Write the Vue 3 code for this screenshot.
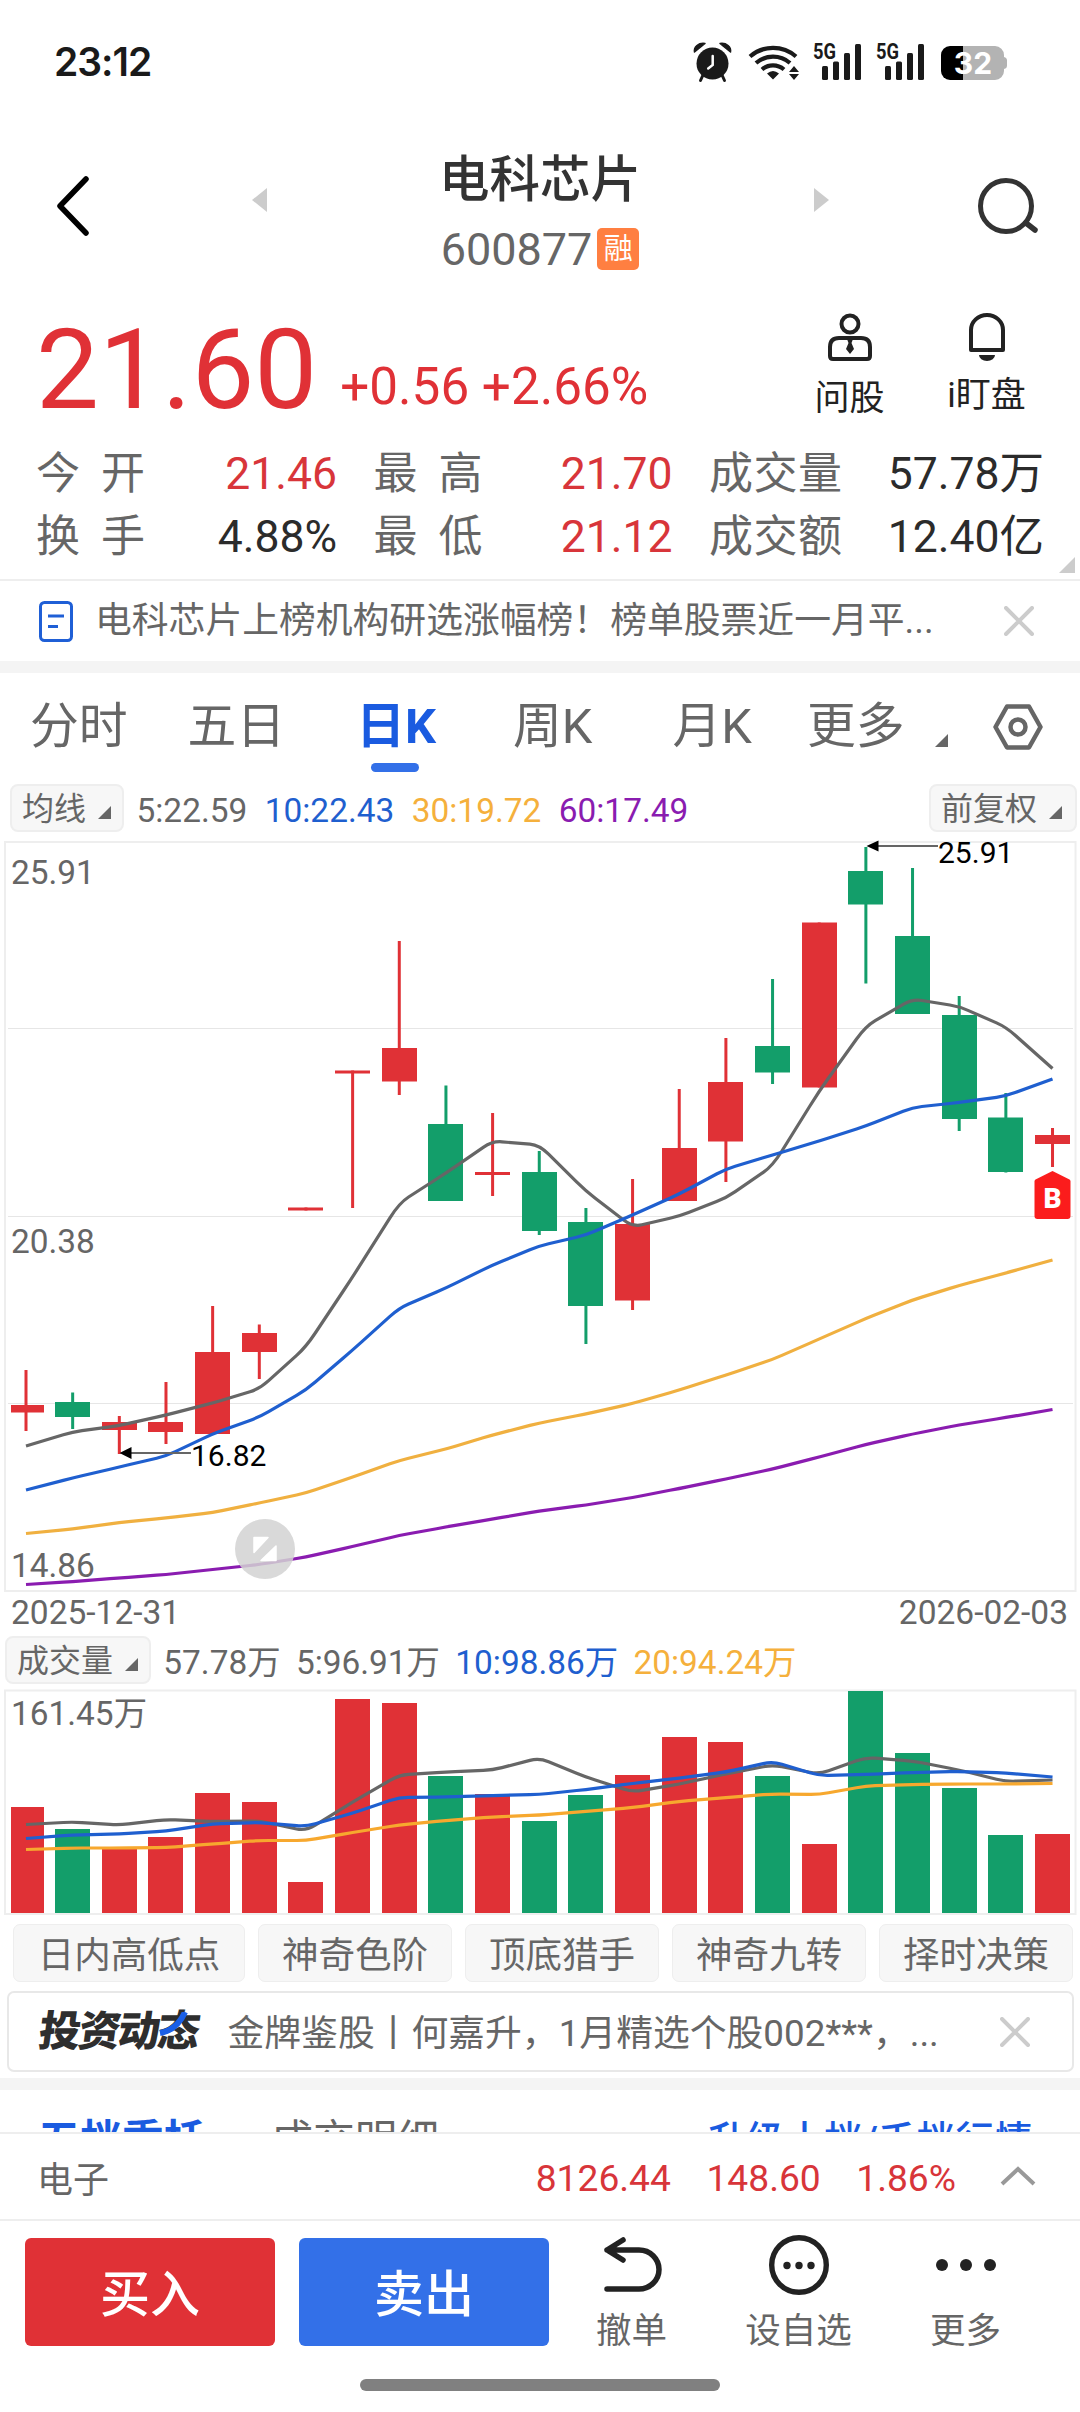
<template>
  <div class="page">
    <div class="status-bar">
      <span class="clock">23:12</span>
      <svg class="status-icons" width="320" height="46" viewBox="690 38 320 46">
        <g fill="#1a1a1a">
          <circle cx="712.5" cy="63.500" r="16" />
          <path d="M694.5 52c-1-5 4-9.500 10.500-8.500zM730.500 52c1-5-4-9.500-10.500-8.500z" stroke="#1a1a1a" stroke-width="1.500" stroke-linejoin="round" />
          <path d="M703 75l-2.500 5.500M722 75l2.500 5.500" stroke="#1a1a1a" stroke-width="3" stroke-linecap="round" />
          <path d="M712.700 56v9l-4.500 3.500" fill="none" stroke="#fff" stroke-width="2.500" stroke-linecap="round" />
        </g>
        <g fill="none" stroke="#1a1a1a" stroke-width="4.200">
          <path d="M750 56.500a35 35 0 0 1 46 0" />
          <path d="M756 63a26 26 0 0 1 34 0" />
          <path d="M762 69.500a17 17 0 0 1 22 0" />
        </g>
        <path d="M767 73.500q6-5 12 0l-6 6zM794 66l5 6h-10zM794 80l5-6h-10z" fill="#1a1a1a" />
        <g v-for="x in [813, 876]" :key="x" fill="#1a1a1a">
          <text :x="x" y="58.500" class="net" textLength="23" lengthAdjust="spacingAndGlyphs">5G</text>
          <rect :x="x + 9" y="66" width="6" height="14" rx="1.500" />
          <rect :x="x + 20" y="61.500" width="6" height="18.500" rx="1.500" />
          <rect :x="x + 31" y="53" width="6" height="27" rx="1.500" />
          <rect :x="x + 42" y="44" width="6" height="36" rx="1.500" />
        </g>
        <path d="M963 46h32a9 9 0 0 1 9 9v2q3 .500 3 3.500v5q0 3-3 3.500v2a9 9 0 0 1-9 9h-32z" fill="#b3b3b3" />
        <path d="M963 46h-13a9 9 0 0 0-9 9v16a9 9 0 0 0 9 9h13z" fill="#000" />
        <text x="973" y="74" class="battery" text-anchor="middle">32</text>
      </svg>
    </div>

    <header class="header">
      <svg class="back" width="34" height="60" viewBox="0 0 34 60">
        <path d="M30 3 4 30l26 27" fill="none" stroke="#000" stroke-width="5.500" stroke-linecap="round" stroke-linejoin="round" />
      </svg>
      <svg class="arrow" width="15" height="24" viewBox="0 0 15 24"><path d="M15 0v24L0 12z" fill="#ccc" /></svg>
      <div class="title">
        <h1>电科芯片</h1>
        <div class="code"><span>600877</span><i>融</i></div>
      </div>
      <svg class="arrow" width="15" height="24" viewBox="0 0 15 24"><path d="M0 0v24l15-12z" fill="#ccc" /></svg>
      <svg class="search" width="64" height="58" viewBox="0 0 64 58">
        <circle cx="29" cy="29" r="25.500" fill="none" stroke="#333" stroke-width="5" />
        <path d="M49 46l9 7" stroke="#333" stroke-width="5.500" stroke-linecap="round" />
      </svg>
    </header>

    <section class="quote">
      <div class="quote-top">
        <span class="price">21.60</span>
        <span class="change">+0.56 +2.66%</span>
        <div class="shortcuts">
          <div class="shortcut">
            <svg width="46" height="48" viewBox="0 0 46 48" fill="none" stroke="#222" stroke-width="4">
              <circle cx="23" cy="11" r="8.500" />
              <path d="M12 25h22q9 0 9 9v9q0 3-3 3H6q-3 0-3-3v-9q0-9 9-9z" />
              <path d="M20 26h6l-1.500 4 2.500 6-4 5-4-5 2.500-6z" fill="#222" stroke="none" />
            </svg>
            <span>问股</span>
          </div>
          <div class="shortcut">
            <svg width="38" height="48" viewBox="0 0 38 48">
              <path d="M3 37V17a16 15 0 0 1 32 0v20z" fill="none" stroke="#222" stroke-width="4" stroke-linejoin="round" />
              <path d="M11 42h16a8 6 0 0 1-16 0z" fill="#222" />
            </svg>
            <span class="watch">i盯盘</span>
          </div>
        </div>
      </div>
      <div class="stats">
        <div v-for="s in stats" :key="s.label" class="stat">
          <span class="stat-label"><b v-for="c in s.label" :key="c">{{ c }}</b></span>
          <span :class="{ up: s.up }">{{ s.value }}</span>
        </div>
      </div>
      <svg class="corner" width="16" height="16" viewBox="0 0 16 16"><path d="M16 0v16H0z" fill="#ccc" /></svg>
    </section>

    <div class="notice">
      <svg width="34" height="41" viewBox="0 0 34 41" fill="none" stroke="#1f5fd6" stroke-width="3">
        <rect x="1.500" y="1.500" width="31" height="38" rx="4" />
        <path d="M9 15h16M9 25.500h10" />
      </svg>
      <span class="notice-text">电科芯片上榜机构研选涨幅榜！榜单股票近一月平...</span>
      <svg class="close" width="30" height="30" viewBox="0 0 30 30"><path d="M2 2l26 26M28 2 2 28" stroke="#ccc" stroke-width="4" stroke-linecap="round" /></svg>
    </div>
    <div class="band"></div>

    <nav class="tabs">
      <span v-for="t in tabs" :key="t" class="tab" :class="{ active: t === '日K' }">{{ t }}</span>
      <svg class="tab-tri" width="13" height="13" viewBox="0 0 13 13"><path d="M13 0v13H0z" fill="#666" /></svg>
      <svg width="50" height="46" viewBox="0 0 50 46" fill="none" stroke="#666" stroke-width="4.500">
        <path d="M14 2.500h22L47.500 23 36 43.500H14L2.500 23z" stroke-linejoin="round" />
        <circle cx="25" cy="23" r="7.500" />
      </svg>
    </nav>

    <div class="legend ma-legend">
      <span class="pill">均线<svg width="13" height="13" viewBox="0 0 13 13"><path d="M13 0v13H0z" fill="#666" /></svg></span>
      <span>5:22.59</span>
      <span class="blue">10:22.43</span>
      <span class="orange">30:19.72</span>
      <span class="purple">60:17.49</span>
      <span class="pill right">前复权<svg width="13" height="13" viewBox="0 0 13 13"><path d="M13 0v13H0z" fill="#666" /></svg></span>
    </div>

    <svg class="chart" width="1080" height="752" viewBox="0 840 1080 752">
      <rect x="5" y="842" width="1070.500" height="749" fill="none" stroke="#eee" stroke-width="2" />
      <path d="M8 1028.500H1073M8 1216.500H1073M8 1403.500H1073" stroke="#e6e6e6" stroke-width="1" />
      <text x="11" y="884" class="axis">25.91</text>
      <text x="11" y="1253" class="axis">20.38</text>
      <text x="11" y="1577" class="axis">14.86</text>
      <g v-for="(k, i) in candles" :key="i" :fill="color(k)">
        <rect :x="cx(i) - 1.5" :y="k[1]" width="3" :height="k[4] - k[1]" />
        <rect :x="barX(i)" :y="k[2]" :width="barW(i)" :height="k[3] - k[2]" />
      </g>
      <path v-for="l in priceLines" :key="l.color" :d="linePath(l.points)" :stroke="l.color" class="line" />
      <path d="M878 846H938M131 1453H191" stroke="#666" stroke-width="2" />
      <path d="M866.500 846l12-5.500v11zM119.500 1453l12-6v12z" fill="#000" />
      <text x="938" y="863" class="mark">25.91</text>
      <text x="191" y="1466" class="mark">16.82</text>
      <path d="M1052.500 1171l17 8.500q1 .500 1 2V1216q0 3-3 3h-30q-3 0-3-3v-34.500q0-1.500 1-2z" fill="#fb1c1c" />
      <text x="1052.500" y="1208" text-anchor="middle" class="buy-mark">B</text>
      <circle cx="265" cy="1549" r="30" fill="#d2d2d2" fill-opacity=".85" />
      <path d="M254 1537.500h14l-14 15zM276 1546v14.500h-15z" fill="#fff" stroke="#fff" stroke-width="1.500" stroke-linejoin="round" />
    </svg>
    <div class="dates"><span>2025-12-31</span><span>2026-02-03</span></div>

    <div class="legend vol-legend">
      <span class="pill">成交量<svg width="13" height="13" viewBox="0 0 13 13"><path d="M13 0v13H0z" fill="#666" /></svg></span>
      <span>57.78万</span>
      <span>5:96.91万</span>
      <span class="blue">10:98.86万</span>
      <span class="orange">20:94.24万</span>
    </div>
    <svg class="chart" width="1080" height="240" viewBox="0 1684 1080 240">
      <rect x="5" y="1690.500" width="1070.500" height="223.500" fill="none" stroke="#eee" stroke-width="2" />
      <text x="11" y="1725" class="axis">161.45万</text>
      <rect v-for="(y, i) in volumes" :key="i" :x="barX(i)" :y="y" :width="barW(i)" :height="1913 - y" :fill="color(candles[i])" />
      <path v-for="l in volumeLines" :key="l.color" :d="linePath(l.points)" :stroke="l.color" class="line" />
    </svg>

    <div class="tools">
      <span v-for="t in tools" :key="t" :class="{ wide: t.length === 5 }">{{ t }}</span>
    </div>

    <div class="ad">
      <div class="ad-logo">
        <span>投资动态</span>
        <svg width="32" height="26" viewBox="0 0 32 26"><path d="M27 0Q19 18 2 21" fill="none" stroke="#1a5fe6" stroke-width="6" /></svg>
      </div>
      <span class="ad-text">金牌鉴股丨何嘉升，1月精选个股002***，...</span>
      <svg width="30" height="30" viewBox="0 0 30 30"><path d="M2 2l26 26M28 2 2 28" stroke="#ccc" stroke-width="4" stroke-linecap="round" /></svg>
    </div>
    <div class="band"></div>

    <div class="depth">
      <b>五档委托</b>
      <span>成交明细</span>
      <a>升级十档/千档行情</a>
    </div>

    <div class="sector">
      <span class="sector-name">电子</span>
      <span>8126.44</span>
      <span>148.60</span>
      <span>1.86%</span>
      <svg width="36" height="20" viewBox="0 0 36 20"><path d="M2 18 18 3l16 15" fill="none" stroke="#999" stroke-width="4" /></svg>
    </div>

    <footer class="actions">
      <button class="buy">买入</button>
      <button class="sell">卖出</button>
      <div class="action">
        <svg width="60" height="60" viewBox="0 0 60 60" fill="none" stroke="#222" stroke-width="5.500" stroke-linecap="round" stroke-linejoin="round">
          <path d="M21 5 5 15l16 10M5 15h32a20 19.500 0 0 1 0 39H5" />
        </svg>
        <span>撤单</span>
      </div>
      <div class="action">
        <svg width="60" height="60" viewBox="0 0 60 60">
          <circle cx="30" cy="30" r="27.300" fill="none" stroke="#222" stroke-width="5.400" />
          <circle v-for="x in [18, 30, 42]" :key="x" :cx="x" cy="30.500" r="3.700" fill="#222" />
        </svg>
        <span>设自选</span>
      </div>
      <div class="action">
        <svg width="60" height="60" viewBox="0 0 60 60" fill="#222">
          <circle v-for="x in [6, 30, 54]" :key="x" :cx="x" cy="30" r="6" />
        </svg>
        <span>更多</span>
      </div>
    </footer>
    <div class="home-bar"></div>
  </div>
</template>

<script setup>
const stats = [
  { label: '今开', value: '21.46', up: true },
  { label: '最高', value: '21.70', up: true },
  { label: '成交量', value: '57.78万' },
  { label: '换手', value: '4.88%' },
  { label: '最低', value: '21.12', up: true },
  { label: '成交额', value: '12.40亿' },
];

const tabs = ['分时', '五日', '日K', '周K', '月K', '更多'];
const tools = ['日内高低点', '神奇色阶', '顶底猎手', '神奇九转', '择时决策'];

// [涨跌, 影线顶, 实体顶, 实体底, 影线底]
const candles = [
  [1, 1370, 1405, 1412.5, 1431],
  [0, 1392.5, 1402, 1417, 1429],
  [1, 1416, 1422, 1430, 1454],
  [1, 1382, 1422, 1432, 1444],
  [1, 1306, 1352, 1434, 1434],
  [1, 1324.5, 1333, 1352, 1379],
  [1, 1207.5, 1207.5, 1210.5, 1210.5],
  [1, 1070.5, 1070.5, 1073.5, 1208],
  [1, 941, 1048, 1081.5, 1095],
  [0, 1085.5, 1124, 1201, 1201],
  [1, 1113, 1172, 1175, 1196],
  [0, 1151, 1172, 1231, 1235],
  [0, 1208, 1222, 1306, 1344],
  [1, 1179, 1224, 1300.5, 1310],
  [1, 1089, 1148, 1201, 1201],
  [1, 1038, 1082, 1141.5, 1182],
  [0, 979, 1046, 1072.5, 1084],
  [1, 922.5, 922.5, 1087.5, 1087.5],
  [0, 847, 871, 904.5, 983.5],
  [0, 868, 936, 1014, 1014],
  [0, 996, 1015, 1119, 1131],
  [0, 1093, 1117.5, 1172, 1172.5],
  [1, 1128, 1135, 1144, 1167],
];

const priceLines = [
  {
    color: '#666',
    points: [1446, 1432, 1425.5, 1415, 1403, 1389, 1347, 1277, 1203, 1173, 1141, 1145, 1191, 1227, 1216, 1198, 1166, 1091, 1026, 999, 1006.5, 1027, 1068.5],
  },
  {
    color: '#1f5fcf',
    points: [1490, 1478, 1467, 1456, 1434, 1417, 1390, 1350, 1308, 1288, 1265, 1246, 1235, 1215, 1194, 1169, 1155, 1141, 1126, 1107.5, 1102.5, 1096, 1079],
  },
  {
    color: '#f0b040',
    points: [1533.5, 1529, 1522.5, 1518, 1512.5, 1503, 1493, 1477, 1460.5, 1449, 1435, 1423, 1414, 1403.5, 1390, 1375, 1359.5, 1339, 1318.5, 1300, 1285.5, 1273, 1260],
  },
  {
    color: '#8a1cb0',
    points: [1584.5, 1581.5, 1578, 1574.5, 1569.5, 1564.5, 1557, 1546.5, 1535.5, 1527, 1519, 1511, 1505, 1497.5, 1488.5, 1479, 1469, 1457, 1444.5, 1434, 1425, 1417.5, 1409.5],
  },
];

const volumes = [
  1807, 1829, 1849, 1837, 1793, 1802, 1882, 1699, 1703, 1776, 1794, 1821,
  1795, 1775, 1737, 1742, 1776, 1844, 1691, 1753, 1788, 1835, 1834,
];

const volumeLines = [
  {
    color: '#666',
    points: [1824.5, 1822, 1825, 1819.5, 1821.5, 1821, 1831, 1802, 1775, 1772, 1770, 1758, 1777, 1792, 1784, 1774, 1765, 1774, 1757.5, 1761, 1770, 1781.5, 1780],
  },
  {
    color: '#1f5fcf',
    points: [1838.5, 1835, 1834, 1831, 1824, 1822.5, 1826.5, 1813, 1797.5, 1797, 1795.5, 1794.5, 1789.5, 1783.5, 1778, 1772, 1761.5, 1775.5, 1774.5, 1772.5, 1771.5, 1773, 1777],
  },
  {
    color: '#f7a82e',
    points: [1849.5, 1848, 1848, 1847.5, 1844, 1840.5, 1840.5, 1832.5, 1825, 1820.5, 1817, 1815, 1811.5, 1807.5, 1801.5, 1797.5, 1794, 1794.5, 1786, 1784.5, 1784, 1784, 1783.5],
  },
];

const STEP = 46.66;
const cx = (i) => 26 + STEP * i;
// 第一根被左边框裁掉一点
const barX = (i) => (i === 0 ? 11 : Math.round(cx(i) - 17.5));
const barW = (i) => (i === 0 ? 33 : 35);
const color = (k) => (k[0] ? '#e03136' : '#139e6a');

// 折线转角做圆滑处理
const linePath = (points) => {
  const r = 0.2;
  let d = `M${cx(0)} ${points[0]}`;
  for (let i = 1; i < points.length - 1; i++) {
    const before = points[i] + (points[i - 1] - points[i]) * r;
    const after = points[i] + (points[i + 1] - points[i]) * r;
    d += ` L${cx(i) - STEP * r} ${before} Q${cx(i)} ${points[i]} ${cx(i) + STEP * r} ${after}`;
  }
  return `${d} L${cx(points.length - 1)} ${points[points.length - 1]}`;
};
</script>

<style>
body {
  margin: 0;
  background: #fff;
}
</style>

<style scoped>
.page {
  width: 1080px;
  height: 2412px;
  overflow: hidden;
  background: #fff;
  color: #666;
  font-family: Roboto, 'Noto Sans CJK SC', sans-serif;
}

.page svg {
  display: block;
  flex-shrink: 0;
}

.status-bar {
  height: 122px;
  padding: 0 70px 0 54px;
  display: flex;
  align-items: center;
  justify-content: space-between;
}

.clock {
  font: 600 39px/46px Inter, sans-serif;
  letter-spacing: -1px;
  padding-top: 2px;
  color: #1a1a1a;
}

.net {
  font: 700 22px 'Roboto', sans-serif;
}

.battery {
  font: 700 30px Inter, sans-serif;
  fill: #fff;
}

.header {
  height: 168px;
  display: grid;
  grid-template-columns: 205px 108px 454px 108px 205px;
  align-items: center;
}

.back {
  margin-left: 56px;
}

.arrow {
  justify-self: center;
  margin-bottom: 12px;
}

.search {
  margin-left: 102px;
}

.title {
  display: flex;
  flex-direction: column;
  align-items: center;
  padding-top: 18px;
}

.title h1 {
  margin: 0;
  font-size: 50.5px;
  font-weight: 500;
  line-height: 68px;
  color: #333;
}

.code {
  display: flex;
  align-items: center;
  gap: 5px;
  height: 70px;
  font-size: 45px;
}

.code span {
  line-height: 71px;
}

.code i {
  width: 42px;
  height: 42px;
  border-radius: 5px;
  background: #ff7f41;
  color: #fff;
  font-size: 29px;
  font-style: normal;
  line-height: 43px;
  text-align: center;
}

.quote {
  position: relative;
  height: 289px;
  border-bottom: 2px solid #eee;
  box-sizing: content-box;
}

.quote-top {
  display: flex;
  align-items: flex-end;
  height: 136px;
  padding: 0 25px 14px 36px;
}

.price {
  font-size: 112px;
  line-height: 112px;
  color: #e03136;
}

.change {
  margin: 0 0 14px 23px;
  font-size: 51.2px;
  line-height: 50px;
  color: #e03136;
}

.shortcuts {
  display: flex;
  align-self: flex-start;
  margin: 23px 0 0 auto;
}

.shortcut {
  width: 137px;
  display: flex;
  flex-direction: column;
  align-items: center;
  font-size: 35px;
  line-height: 40px;
  color: #222;
}

.shortcut span {
  margin-top: 18px;
}

.shortcut .watch {
  margin-top: 15px;
}

.stats {
  display: grid;
  grid-template-columns: 301px 299px 335px;
  gap: 0 36.500px;
  padding: 3px 35px 0 36px;
  font-size: 44.5px;
  line-height: 63px;
  color: #2b2b2b;
}

.stat {
  display: flex;
  justify-content: space-between;
}

.stat-label {
  width: 109px;
  display: flex;
  justify-content: space-between;
  color: #666;
  font-size: 44px;
}

.stat:nth-child(3n) .stat-label {
  width: 133px;
}

.stat-label b {
  font-weight: 400;
}

.up {
  color: #d8353a;
}

.corner {
  position: absolute;
  right: 5px;
  bottom: 6px;
}

.notice {
  height: 80px;
  display: flex;
  align-items: center;
  padding: 0 46px 0 39px;
}

.notice-text {
  margin-left: 22px;
  font-size: 36.8px;
  line-height: 82px;
  white-space: nowrap;
}

.close {
  margin-left: auto;
}

.band {
  height: 12px;
  background: #f4f4f4;
}

.tabs {
  height: 107px;
  display: flex;
  align-items: center;
  padding-left: 30px;
}

.tab {
  position: relative;
  font-size: 48.8px;
  line-height: 111px;
  margin-right: 60px;
}

.tab.active {
  color: #1a5be0;
  font-weight: 700;
}

.tab.active::after {
  content: '';
  position: absolute;
  left: 50%;
  bottom: 10px;
  width: 48px;
  height: 9px;
  margin-left: -25px;
  border-radius: 5px;
  background: #3370e8;
}

.tab:nth-child(2) {
  margin-right: 71px;
}

.tab:nth-child(3) {
  margin-right: 77px;
}

.tab:nth-child(4) {
  margin-right: 80px;
}

.tab:nth-child(5) {
  margin-right: 55px;
}

.tab:nth-child(6) {
  margin-right: 30px;
}

.tab-tri {
  margin: 28px 45px 0 0;
}

.legend {
  height: 48px;
  display: flex;
  align-items: center;
  font-size: 33.4px;
}

.legend > span {
  line-height: 48px;
  padding-top: 5px;
}

.ma-legend {
  margin: 4px 3px 8px 10px;
  gap: 17.5px;
}

.vol-legend {
  margin-left: 5px;
  gap: 15.3px;
}

.legend .pill {
  height: 48px;
  box-sizing: border-box;
  display: flex;
  align-items: center;
  padding: 3px 11px 0 10px;
  border: 2px solid #eee;
  border-radius: 8px;
  background: #f7f7f7;
  font-size: 32px;
  line-height: 45px;
}

.ma-legend .pill {
  margin-right: -5px;
}

.vol-legend .pill {
  margin-right: -3px;
}

.pill svg {
  margin: 6px 0 0 12px;
}

.ma-legend .pill.right {
  margin-left: auto;
  margin-right: 0;
  padding-right: 13px;
}

.blue {
  color: #1f5fcf;
}

.orange {
  color: #f5b03c;
}

.purple {
  color: #8a1cb0;
}

.chart {
  overflow: visible;
}

.axis {
  font-size: 33.4px;
  fill: #666;
}

.mark {
  font-size: 30px;
  fill: #000;
}

.buy-mark {
  font-size: 28px;
  font-weight: 900;
  fill: #fff;
}

.line {
  fill: none;
  stroke-width: 3.2;
}

.dates {
  height: 44px;
  display: flex;
  justify-content: space-between;
  padding: 0 12px 0 11px;
  font-size: 33.5px;
  line-height: 42px;
}

.tools {
  height: 58px;
  display: flex;
  gap: 13px;
  padding: 0 7px 0 13px;
}

.tools span {
  flex: 1;
  box-sizing: border-box;
  border: 1.5px solid #eee;
  border-radius: 7px;
  background: #f7f7f7;
  font-size: 36.5px;
  line-height: 61px;
  text-align: center;
}

.tools .wide {
  flex: 0 0 232px;
}

.ad {
  height: 81px;
  box-sizing: border-box;
  margin: 9px 6px 6px 7px;
  padding: 0 42px 0 30px;
  display: flex;
  align-items: center;
  justify-content: space-between;
  border: 2px solid #e8e8e8;
  border-radius: 7px;
}

.ad-logo {
  position: relative;
  width: 160px;
  color: #2e2e2e;
  font-size: 42px;
  font-weight: 900;
  line-height: 84px;
  letter-spacing: -2.4px;
  white-space: nowrap;
}

.ad-logo span {
  display: block;
  transform: skewX(-8deg);
}

.ad-logo svg {
  position: absolute;
  left: 119px;
  top: 22px;
}

.ad-text {
  width: 744px;
  font-size: 36.8px;
  line-height: 78px;
  padding-top: 4px;
  white-space: nowrap;
}

.depth {
  height: 42px;
  overflow: hidden;
  display: flex;
  align-items: flex-start;
  padding: 0 47px 0 38px;
  font-size: 42px;
  line-height: 42px;
}

.depth > * {
  margin-top: 30px;
}

.depth b {
  color: #1a5be0;
}

.depth span {
  margin-left: 65px;
}

.depth a {
  margin-left: auto;
  color: #1a5be0;
  font-size: 38.8px;
  font-weight: 500;
}

.sector {
  height: 87px;
  box-sizing: border-box;
  display: flex;
  align-items: center;
  border-top: 2px solid #eee;
  padding: 3px 44px 0 37px;
  color: #d8353a;
  font-size: 37.2px;
}

.sector span {
  margin-right: 35.5px;
}

.sector .sector-name {
  margin: -3px auto 0 0;
  color: #666;
  font-size: 36px;
}

.sector svg {
  margin: -4px 0 0 8.5px;
}

.actions {
  height: 160px;
  box-sizing: border-box;
  border-top: 2px solid #eee;
  display: flex;
  padding: 17px 31px 0 25px;
}

.actions button {
  width: 250px;
  height: 108px;
  margin-right: 24px;
  padding: 7px 0 0;
  border: 0;
  border-radius: 6px;
  color: #fff;
  font: 500 50px/101px Roboto, 'Noto Sans CJK SC', sans-serif;
}

.buy {
  background: #e03136;
}

.sell {
  background: #3370e8;
}

.action {
  width: 167px;
  display: flex;
  flex-direction: column;
  align-items: center;
  font-size: 35.5px;
  line-height: 42px;
}

.action:nth-child(3) {
  margin-left: -25px;
}

.action svg {
  margin: -3px 0 15px;
}

.home-bar {
  width: 360px;
  height: 12px;
  margin: 0 auto;
  border-radius: 6px;
  background: #808080;
}
</style>
